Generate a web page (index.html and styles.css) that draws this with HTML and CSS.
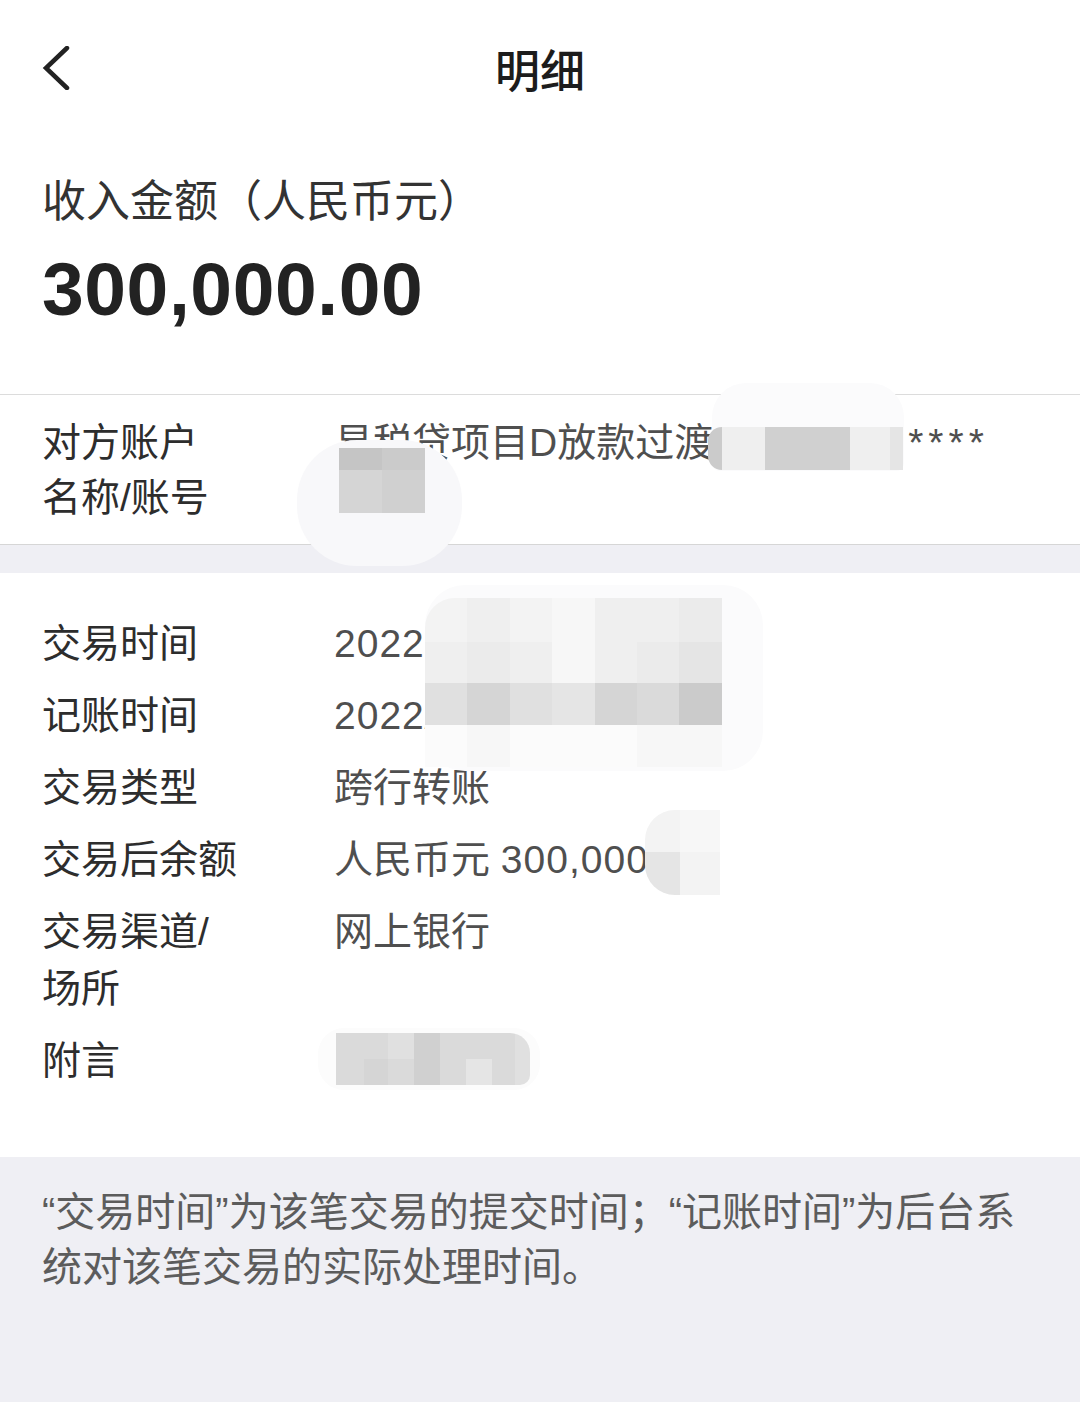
FILE: index.html
```html
<!DOCTYPE html>
<html lang="zh-CN">
<head>
<meta charset="utf-8">
<title>明细</title>
<link rel="stylesheet" href="styles.css">
</head>
<body>
<div class="page">
  <header class="nav">
    <span class="back">
      <svg width="30" height="44" viewBox="0 0 30 44"><polyline points="25,2 4,22 25,42" fill="none" stroke="#222" stroke-width="4.5" stroke-linecap="round" stroke-linejoin="miter"/></svg>
    </span>
    <h1 class="title">明细</h1>
    <span></span>
  </header>

  <section class="summary">
    <div class="sum-label">收入金额（人民币元）</div>
    <div class="sum-amount">300,000.00</div>
  </section>

  <section class="account">
    <div class="row">
      <div class="label">对方账户<br>名称/账号</div>
      <div class="value">易税贷项目D放款过渡<span class="gap"></span><span class="stars">****</span><br>&nbsp;</div>
    </div>
  </section>

  <section class="details">
    <div class="row"><div class="label">交易时间</div><div class="value"><span class="num">2022</span></div></div>
    <div class="row"><div class="label">记账时间</div><div class="value"><span class="num">2022/</span></div></div>
    <div class="row"><div class="label">交易类型</div><div class="value">跨行转账</div></div>
    <div class="row"><div class="label">交易后余额</div><div class="value">人民币元 <span class="num">300,000</span></div></div>
    <div class="row"><div class="label">交易渠道/<br>场所</div><div class="value">网上银行</div></div>
    <div class="row"><div class="label">附言</div><div class="value">&nbsp;</div></div>
  </section>

  <footer class="note">“交易时间”为该笔交易的提交时间；“记账时间”为后台系统对该笔交易的实际处理时间。</footer>

  <!-- privacy mosaics laid over the content -->
  <div class="halo halo-a"></div>
  <div class="mosaic mos-a"><i class="k11"></i><i class="k4"></i><i class="k10"></i><i class="k4"></i><i class="k6"></i></div>

  <div class="halo halo-b"></div>
  <div class="mosaic mos-b"><i class="k12"></i><i class="k11"></i><i class="k9"></i><i class="k10"></i></div>

  <div class="halo halo-c"></div>
  <div class="mosaic mos-c">
    <i class="k3"></i><i class="k4"></i><i class="k3"></i><i class="k2"></i><i class="k4"></i><i class="k4"></i><i class="k5"></i>
    <i class="k4"></i><i class="k5"></i><i class="k4"></i><i class="k2"></i><i class="k4"></i><i class="k5"></i><i class="k6"></i>
    <i class="k7"></i><i class="k9"></i><i class="k7"></i><i class="k6"></i><i class="k9"></i><i class="k8"></i><i class="k11"></i>
    <i class="k1"></i><i class="k2"></i><i class="k1"></i><i class="k1"></i><i class="k1"></i><i class="k2"></i><i class="k2"></i>
  </div>

  <div class="mosaic mos-d"><i class="k3"></i><i class="k2"></i><i class="k6"></i><i class="k3"></i></div>

  <div class="halo halo-e"></div>
  <div class="mosaic mos-e">
    <i class="k8"></i><i class="k8"></i><i class="k7"></i><i class="k10"></i><i class="k8"></i><i class="k8"></i><i class="k8"></i><i class="k7"></i>
    <i class="k8"></i><i class="k9"></i><i class="k8"></i><i class="k10"></i><i class="k8"></i><i class="k6"></i><i class="k8"></i><i class="k7"></i>
  </div>
</div>
</body>
</html>
```

FILE: styles.css
```css
* { box-sizing: border-box; margin: 0; padding: 0; }

html, body {
  background: #efeff4;
}

body {
  font-family: "Liberation Sans", "Noto Sans CJK SC", sans-serif;
  color: #2d2d2d;
}

.page {
  position: relative;
  width: 1080px;
  min-height: 1402px;
  background: #efeff4;
  overflow: hidden;
}

/* ---------- nav ---------- */
.nav {
  display: grid;
  grid-template-columns: 1fr auto 1fr;
  align-items: center;
  height: 136px;
  padding: 0 42px;
  background: #fff;
}

.back {
  display: flex;
  align-items: center;
}

.title {
  font-family: "Noto Sans CJK SC", sans-serif;
  font-size: 45px;
  font-weight: 500;
  color: #1c1c1c;
  line-height: 1;
}

/* ---------- summary ---------- */
.summary {
  background: #fff;
  padding: 31px 42px 65px;
  border-bottom: 1px solid #dcdcdc;
}

.sum-label {
  font-family: "Noto Sans CJK SC", sans-serif;
  font-size: 44px;
  line-height: 62px;
  color: #333;
}

.sum-amount {
  margin-top: 20px;
  font-size: 75px;
  font-weight: 700;
  line-height: 80px;
  letter-spacing: 0.6px;
  color: #222;
}

/* ---------- rows ---------- */
.row {
  display: grid;
  grid-template-columns: 292px 1fr;
  font-size: 39px;
}

.label {
  color: #2d2d2d;
}

.value {
  color: #4f4f4f;
  white-space: nowrap;
}

.num {
  letter-spacing: 1px;
}

.account {
  background: #fff;
  padding: 20px 42px 19px;
  border-bottom: 1px solid #d6d6d6;
  margin-bottom: 28px;
}

.account .row {
  line-height: 55px;
}

.gap {
  display: inline-block;
  width: 195px;
}

.stars {
  letter-spacing: 5px;
}

.details {
  background: #fff;
  padding: 42px 42px 68px;
  display: flex;
  flex-direction: column;
  gap: 15px;
}

.details .row {
  line-height: 57px;
}

/* ---------- footer note ---------- */
.note {
  padding: 28px 50px 0 42px;
  font-size: 40px;
  line-height: 55px;
  color: #5c5c5c;
}

/* ---------- privacy mosaics (overlay) ---------- */
.halo {
  position: absolute;
  background: #fbfbfc;
}

.halo-a {
  left: 712px; top: 383px; width: 192px; height: 88px;
  border-radius: 34px 34px 8px 8px;
}

.halo-b {
  left: 297px; top: 440px; width: 165px; height: 126px;
  border-radius: 60px;
  background: #f8f8fa;
}

.halo-c {
  left: 425px; top: 585px; width: 338px; height: 186px;
  border-radius: 40px;
}

.halo-e {
  left: 318px; top: 1028px; width: 222px; height: 62px;
  border-radius: 26px;
  background: #fcfcfc;
}

.mosaic {
  position: absolute;
  display: grid;
  overflow: hidden;
}

.mosaic i { display: block; }

.mos-a {
  left: 708px; top: 427px;
  grid-template-columns: 14px 43px 85px 40px 13px;
  grid-template-rows: 43px;
  border-radius: 14px 0 0 14px;
}

.mos-b {
  left: 339px; top: 448px;
  grid-template-columns: 43px 43px;
  grid-template-rows: 22px 43px;
}

.mos-c {
  left: 425px; top: 598px;
  grid-template-columns: repeat(7, 42.4px);
  grid-template-rows: 44px 41px 42px 42px;
  border-radius: 30px 0 0 0;
}

.mos-d {
  left: 645px; top: 810px;
  grid-template-columns: 35px 40px;
  grid-template-rows: 42px 43px;
  border-radius: 30px 0 0 30px;
}

.mos-e {
  left: 336px; top: 1033px;
  grid-template-columns: 28px 24px 26px 26px 26px 26px 23px 15px;
  grid-template-rows: 26px 26px;
  border-radius: 0 20px 10px 0;
}

.k1 { background: #fbfbfb; }
.k2 { background: #f7f7f7; }
.k3 { background: #f3f3f3; }
.k4 { background: #efefef; }
.k5 { background: #ebebeb; }
.k6 { background: #e5e5e5; }
.k7 { background: #e0e0e0; }
.k8 { background: #dadada; }
.k9 { background: #d5d5d5; }
.k10 { background: #d0d0d0; }
.k11 { background: #cbcbcb; }
.k12 { background: #c5c5c5; }
```
